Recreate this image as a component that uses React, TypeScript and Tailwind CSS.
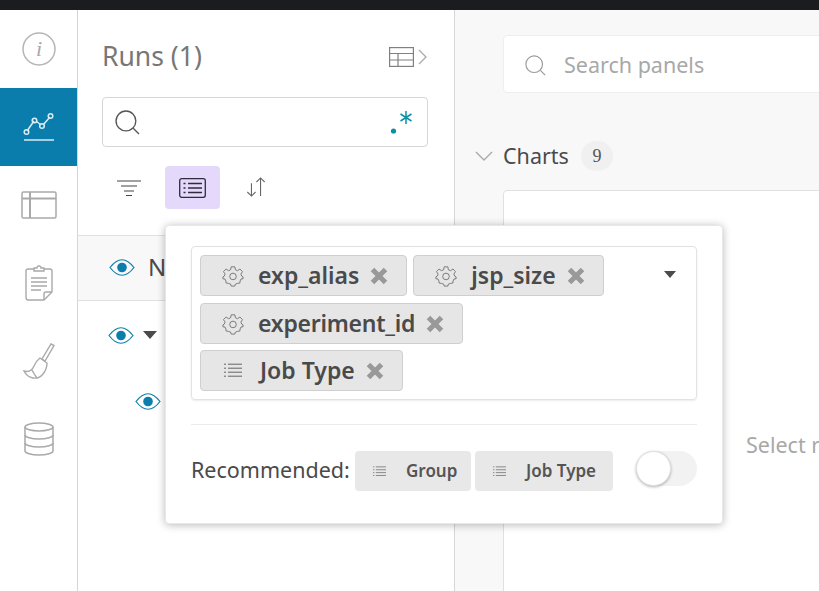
import React from 'react';

function InfoIcon() {
  return (
    <svg width="34" height="34" viewBox="0 0 34 34" fill="none">
      <circle cx="17" cy="17" r="16" stroke="#b5b5b5" strokeWidth="1.5" />
      <text x="17" y="24" textAnchor="middle" fontFamily="Liberation Serif" fontStyle="italic" fontSize="22" fill="#a8a8a8">i</text>
    </svg>
  );
}

function ChartIcon() {
  return (
    <svg width="32" height="30" viewBox="0 0 32 30" fill="none" stroke="#d8edf5" strokeWidth="1.5">
      <path d="M4 19L11 9M13 9L18 13M20 13L27 5" />
      <circle cx="3.5" cy="20" r="2.3" />
      <circle cx="11.5" cy="8.5" r="2.3" />
      <circle cx="19" cy="14" r="2.3" />
      <circle cx="27.5" cy="4" r="2.3" />
      <path d="M1 28H31" />
    </svg>
  );
}

function TableIcon() {
  return (
    <svg width="36" height="28" viewBox="0 0 36 28" fill="none" stroke="#a9a9a9" strokeWidth="1.5">
      <rect x="1" y="1" width="34" height="26" rx="1.5" />
      <path d="M1 7.5H35M9 1V27" strokeWidth="2" />
    </svg>
  );
}

function ReportIcon() {
  return (
    <svg width="28" height="36" viewBox="0 0 28 36" fill="none" stroke="#a9a9a9" strokeWidth="1.4">
      <path d="M9 4H3Q1 4 1 6V32Q1 35 3 35H19L27 27V6Q27 4 25 4H19" />
      <path d="M9 6V3H12Q12 1 14 1Q16 1 16 3H19V6Z" />
      <path d="M6 13H22M6 17H22M6 21H22M6 25H16" />
      <path d="M19 35V29Q19 27 21 27H27" />
    </svg>
  );
}

function BroomIcon() {
  return (
    <svg width="32" height="36" viewBox="0 0 32 36" fill="none" stroke="#a9a9a9" strokeWidth="1.4">
      <path d="M28 1L31 2.5L22 18L19 16Z" />
      <path d="M17 15L24 20Q24 26 20 31Q16 36 10 35Q4 34 1 28Q8 30 11 23Q13 18 17 15Z" />
      <path d="M9 27Q11 31 14 35" />
    </svg>
  );
}

function DatabaseIcon() {
  return (
    <svg width="30" height="34" viewBox="0 0 30 34" fill="none" stroke="#a9a9a9" strokeWidth="1.5">
      <ellipse cx="15" cy="5" rx="14" ry="4" />
      <path d="M1 5V29C1 31 7 33 15 33C23 33 29 31 29 29V5" />
      <path d="M1 13C1 15 7 17 15 17C23 17 29 15 29 13M1 21C1 23 7 25 15 25C23 25 29 23 29 21" />
    </svg>
  );
}

function SearchIcon({ size, color }: { size: number; color: string }) {
  return (
    <svg width={size} height={size} viewBox="0 0 24 24" fill="none" stroke={color} strokeWidth="1.3">
      <circle cx="10.5" cy="10.5" r="9.5" />
      <path d="M17.5 17.5L23 23" />
    </svg>
  );
}

function EyeIcon() {
  return (
    <svg width="26" height="17" viewBox="0 0 26 17" fill="none">
      <path d="M1 8.5Q13 -7 25 8.5Q13 24 1 8.5Z" stroke="#0b7eac" strokeWidth="1.2" />
      <circle cx="13" cy="8.5" r="4.8" fill="#0b7eac" />
    </svg>
  );
}

function GearIcon() {
  return (
    <svg width="22" height="22" viewBox="0 0 24 24" fill="none" stroke="#666" strokeWidth="0.9" strokeLinejoin="round">
      <path d="M10 2H14L14.6 5.2L16.9 6.2L19.6 4.4L22.4 7.2L20.6 9.9L21.5 12.1L23 13L23 15L20.7 15.3L19.7 17.6L19.6 19.6L16.9 20.1L14.6 20.8L14 23H10L9.4 20.8L7.1 20.1L4.4 19.6L4.3 17.6L3.3 15.3L1 15L1 13L2.5 12.1L3.4 9.9L1.6 7.2L4.4 4.4L7.1 6.2L9.4 5.2Z" />
      <circle cx="12" cy="12.5" r="3.6" />
    </svg>
  );
}

function ListIcon({ size = 18 }: { size?: number }) {
  return (
    <svg width={size} height={size * 0.8} viewBox="0 0 18 14" stroke="#555" strokeWidth="0.9" fill="none">
      <path d="M0 1H2M4 1H18M0 5H2M4 5H18M0 9H2M4 9H18M0 13H2M4 13H18" />
    </svg>
  );
}

function RemoveIcon() {
  return (
    <svg width="18" height="18" viewBox="0 0 18 18" stroke="#999" strokeWidth="5" fill="none">
      <path d="M2.5 2.5L15.5 15.5M15.5 2.5L2.5 15.5" />
    </svg>
  );
}

function Tag({ label, list, textClass = '' }: { label: string; list?: boolean; textClass?: string }) {
  return (
    <div className="flex h-[41px] items-center rounded-[4px] border border-[#cfcfcf] bg-[#e6e6e6] pl-[21px] pr-[18px]">
      <span className="flex w-[22px] justify-center">{list ? <ListIcon /> : <GearIcon />}</span>
      <span className={`ml-[14px] mr-[11px] text-[23px] font-semibold leading-none text-[#4a4a4a] ${textClass}`}>{label}</span>
      <RemoveIcon />
    </div>
  );
}

function RecommendedTag({ label, width }: { label: string; width: string }) {
  return (
    <div className={`flex h-10 items-center rounded-[4px] bg-[#e8e8e8] pl-[18px] ${width}`}>
      <ListIcon size={13} />
      <span className="ml-[20px] text-[17px] font-semibold text-[#555]">{label}</span>
    </div>
  );
}

const navItems = [
  { key: 'info', icon: <InfoIcon /> },
  { key: 'charts', icon: <ChartIcon />, active: true },
  { key: 'table', icon: <TableIcon /> },
  { key: 'report', icon: <ReportIcon /> },
  { key: 'broom', icon: <BroomIcon /> },
  { key: 'db', icon: <DatabaseIcon /> },
];

export default function App() {
  return (
    <div className="relative flex h-[591px] w-[819px] flex-col overflow-hidden bg-white font-['Noto_Sans',sans-serif]">
      <div className="h-[10px] shrink-0 bg-[#1a1c20]" />
      <div className="flex min-h-0 flex-1">
        {/* Nav */}
        <div className="w-[78px] shrink-0 border-r border-[#d6d6d6]">
          {navItems.map((item) => (
            <div
              key={item.key}
              className={`flex h-[78px] items-center justify-center ${item.active ? 'bg-[#0a7dad]' : ''}`}
            >
              {item.icon}
            </div>
          ))}
        </div>

        {/* Runs */}
        <div className="w-[377px] shrink-0 border-r border-[#d6d6d6]">
          <div className="flex h-[87px] items-center justify-between pl-6 pr-[27px] pt-[7px]">
            <span className="text-[26.5px] text-[#777]">Runs (1)</span>
            <div className="flex items-center gap-[4px]">
              <svg width="25" height="20" viewBox="0 0 25 20" fill="none" stroke="#808080" strokeWidth="1.2">
                <rect x="0.6" y="0.6" width="23.8" height="18.8" />
                <path d="M0.6 6.5H24.4M0.6 13H24.4M9 6.5V19.4" />
              </svg>
              <svg width="9" height="16" viewBox="0 0 9 16" fill="none" stroke="#aaa" strokeWidth="1.3">
                <path d="M1 1L8 8L1 15" />
              </svg>
            </div>
          </div>
          <div className="mx-6 flex h-[50px] w-[326px] items-center justify-between rounded-[4px] border border-[#d6d6d6] pl-3 pr-[13px]">
            <SearchIcon size={25} color="#555" />
            <svg width="24" height="30" viewBox="0 0 24 30" fill="none" stroke="#0a91a8" strokeWidth="1.5">
              <circle cx="3.5" cy="24" r="2.6" fill="#0a91a8" stroke="none" />
              <path d="M16 4V17M10.5 7L21.5 14M21.5 7L10.5 14" />
            </svg>
          </div>
          <div className="ml-[87px] mt-[19px] flex h-[43px] w-[55px] items-center justify-center rounded-[4px] bg-[#e4d9fb]">
            <svg width="27" height="20" viewBox="0 0 27 20" fill="none" stroke="#2c2c3c" strokeWidth="1.3">
              <rect x="0.7" y="0.7" width="25.6" height="18.6" rx="2" />
              <path d="M4.5 5.5H6.5M9 5.5H23M4.5 10H6.5M9 10H23M4.5 14.5H6.5M9 14.5H23" />
            </svg>
          </div>
          <div className="mt-[26px] flex h-[66px] items-center border-y border-[#e0e0e0] bg-[#f8f8f8] pb-[2px] pl-[31px]">
            <EyeIcon />
            <span className="ml-[13px] text-[24px] text-[#4a4a4a]">N</span>
          </div>
          <div className="flex h-[68px] items-center pl-[30px]">
            <EyeIcon />
            <span className="ml-[9px] h-0 w-0 border-x-[7px] border-t-[8px] border-x-transparent border-t-[#4a4a4a]" />
          </div>
          <div className="flex h-[62px] items-start pl-[57px] pt-[24px]">
            <EyeIcon />
          </div>
        </div>

        {/* Main */}
        <div className="min-w-0 flex-1 bg-[#f8f8f8] pl-[48px]">
          <div className="mt-[25px] flex h-[58px] w-[400px] items-center rounded-[4px] border border-[#eeeeee] bg-white pl-[21px] pt-[2px]">
            <SearchIcon size={21} color="#999" />
            <span className="ml-[18px] text-[21.5px] text-[#a8a8a8]">Search panels</span>
          </div>
          <div className="mt-[41px] flex h-[44px] items-center">
            <svg className="-ml-[28px]" width="18" height="10" viewBox="0 0 18 10" fill="none" stroke="#aaa" strokeWidth="1.4">
              <path d="M1 1L9 9L17 1" />
            </svg>
            <span className="ml-[10px] text-[21.5px] text-[#4a4a4a]">Charts</span>
            <span className="ml-[12px] flex h-[30px] w-[32px] items-center justify-center rounded-full bg-[#f0f0f0] font-['Liberation_Serif',serif] text-[18px] text-[#555]">9</span>
          </div>
          <div className="mt-[12px] h-[420px] w-[400px] rounded-[4px] border border-[#e0e0e0] bg-white pl-[242px] pt-[238px]">
            <span className="whitespace-nowrap text-[21.5px] text-[#a8a8a8]">Select runs</span>
          </div>
        </div>
      </div>

      {/* Grouping popover */}
      <div className="absolute left-[165px] top-[225px] h-[299px] w-[558px] rounded-[4px] border border-[#e8e8e8] bg-white pl-[25px] pt-5 shadow-[0_1px_9px_rgba(0,0,0,0.28)]">
        <div className="relative h-[154px] w-[506px] rounded-[4px] border border-[#e2e2e2] pl-2 pt-2 shadow-[0_1px_2px_rgba(0,0,0,0.08)]">
          <div className="flex flex-col">
            <div className="flex gap-[6px]">
              <Tag label="exp_alias" />
              <Tag label="jsp_size" />
            </div>
            <div className="mt-[7px] flex">
              <Tag label="experiment_id" textClass="tracking-[-0.25px]" />
            </div>
            <div className="mt-[6px] flex">
              <Tag label="Job Type" list textClass="ml-[16px]" />
            </div>
          </div>
          <span className="absolute right-[20px] top-[24px] h-0 w-0 border-x-[6px] border-t-[7px] border-x-transparent border-t-[#4a4a4a]" />
        </div>
        <div className="mt-6 w-[506px] border-t border-[#ececec]" />
        <div className="mt-[26px] flex items-start">
          <span className="w-[164px] shrink-0 text-[21.5px] leading-[37px] text-[#4a4a4a]">Recommended:</span>
          <div className="flex gap-1">
            <RecommendedTag label="Group" width="w-[116px]" />
            <RecommendedTag label="Job Type" width="w-[138px]" />
          </div>
          <div className="relative ml-[23px] h-[35px] w-[61px] rounded-full bg-[#f2f2f2]">
            <span className="absolute left-0 top-0 h-[35px] w-[35px] rounded-full border border-[#e2e2e2] bg-white shadow-[0_1px_3px_rgba(0,0,0,0.3)]" />
          </div>
        </div>
      </div>

      {/* Filter and sort sit beside the active button */}
      <div className="absolute left-[117px] top-[180px]">
        <svg width="24" height="16" viewBox="0 0 24 16" fill="none" stroke="#444" strokeWidth="1.2">
          <path d="M0 1H24M4 6H20M7 11H17M9 15.5H15" />
        </svg>
      </div>
      <div className="absolute left-[246px] top-[176px]">
        <svg width="20" height="22" viewBox="0 0 22 22" fill="none" stroke="#666" strokeWidth="1.2">
          <path d="M6 7V21M1.5 16.5L6 21L10.5 16.5M16 21V1M11.5 5.5L16 1L20.5 5.5" />
        </svg>
      </div>
    </div>
  );
}
